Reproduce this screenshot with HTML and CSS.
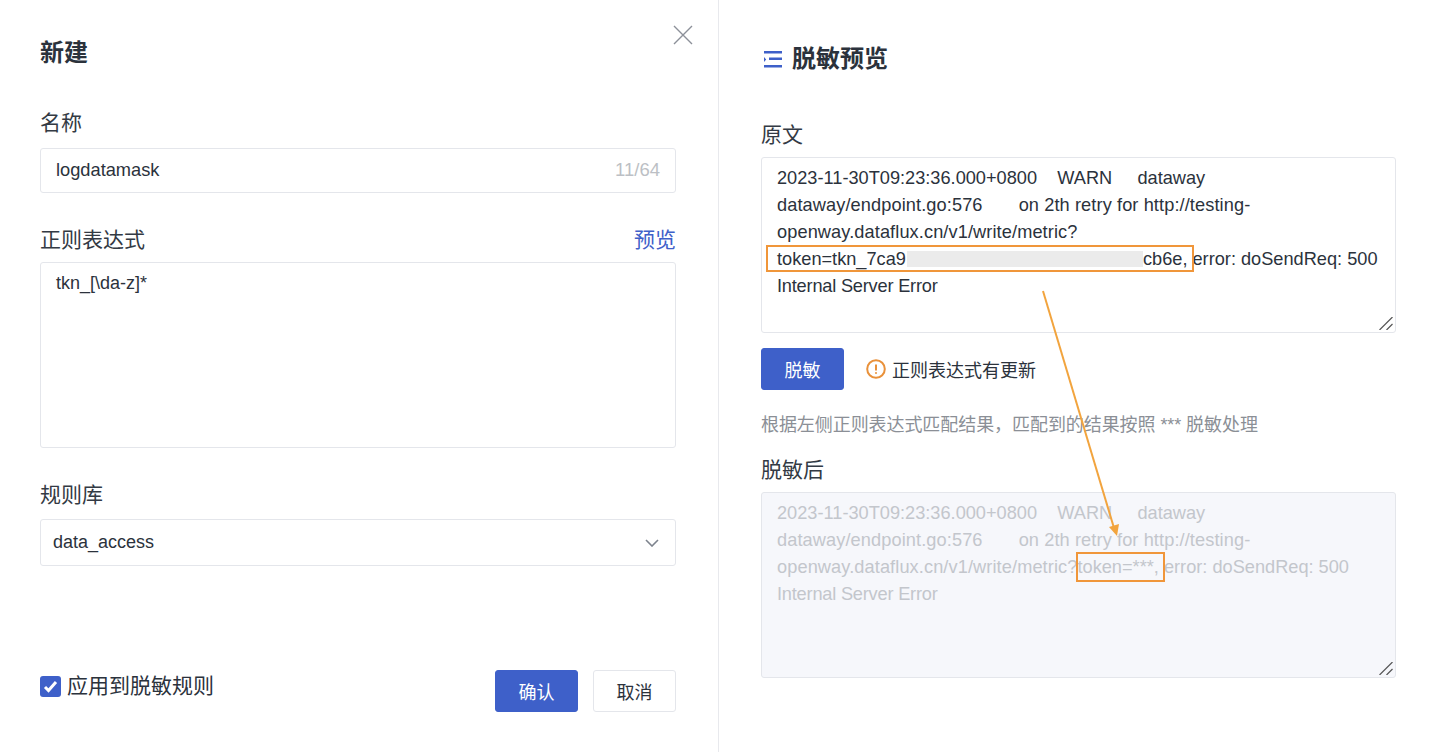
FILE: index.html
```html
<!DOCTYPE html>
<html lang="zh-CN">
<head>
  <meta charset="UTF-8">
  <title>新建</title>
  <meta name="viewport" content="width=device-width, initial-scale=1.0">
  <link rel="stylesheet" href="styles.css">
</head>
<body>
  <!-- Left: create form -->
  <section class="form-panel">
    <svg class="close-icon" width="20" height="20" viewBox="0 0 20 20"><path d="M1 1l18 18M19 1L1 19"/></svg>
    <h2 class="panel-title">新建</h2>

    <div class="field name-field">
      <label class="field-label">名称</label>
      <div class="input-box">
        <span>logdatamask</span>
        <span class="counter">11/64</span>
      </div>
    </div>

    <div class="field regex-field">
      <div class="label-row">
        <label class="field-label">正则表达式</label>
        <a class="preview-link" href="#">预览</a>
      </div>
      <div class="regex-box">tkn_[\da-z]*</div>
    </div>

    <div class="field rule-field">
      <label class="field-label">规则库</label>
      <div class="select-box">
        <span>data_access</span>
        <svg class="chevron" width="14" height="8" viewBox="0 0 14 8"><path d="M1 1l6 6 6-6"/></svg>
      </div>
    </div>

    <div class="form-footer">
      <label class="apply-check">
        <span class="check-mark">
          <svg width="15" height="13" viewBox="0 0 15 13"><path d="M2 7l3.500 3.500L13 2"/></svg>
        </span>
        应用到脱敏规则
      </label>
      <div class="footer-btns">
        <button class="btn btn-primary">确认</button>
        <button class="btn btn-plain">取消</button>
      </div>
    </div>
  </section>

  <!-- Right: preview -->
  <section class="preview-panel">
    <div class="preview-head">
      <svg class="list-icon" width="18" height="18" viewBox="0 0 18 18">
        <path d="M0 1h18v2.400H0zM5 7.500h13v2.400H5zM0 15h18v2.400H0zM0 7l2.200 2.500L0 12z"/>
      </svg>
      <h2 class="panel-title">脱敏预览</h2>
    </div>

    <label class="field-label source-label">原文</label>
    <div class="text-box">2023-11-30T09:23:36.000+0800    WARN     dataway<br><span class="url">dataway/endpoint.go:576       on 2th retry for http://testing-</span><br><span class="url">openway.dataflux.cn/v1/write/metric?</span><br>token=tkn_7ca9<span class="redacted"></span>cb6e, error: doSendReq: 500<br><span class="last-line">Internal Server Error</span><svg class="grip" width="14" height="13" viewBox="0 0 14 13"><path d="M0.500 13L13.500 0M7.500 13L13.500 7"/></svg></div>

    <div class="action-row">
      <button class="btn btn-primary">脱敏</button>
      <span class="update-note">
        <svg width="20" height="20" viewBox="0 0 20 20">
          <circle cx="10" cy="10" r="8.800"/>
          <path d="M10 5.500v6M10 13.200v1.600"/>
        </svg>
        正则表达式有更新
      </span>
    </div>

    <p class="hint">根据左侧正则表达式匹配结果，匹配到的结果按照 *** 脱敏处理</p>

    <label class="field-label result-label">脱敏后</label>
    <div class="text-box text-box-disabled">2023-11-30T09:23:36.000+0800    WARN     dataway<br><span class="url">dataway/endpoint.go:576       on 2th retry for http://testing-</span><br><span class="url">openway.dataflux.cn/v1/write/metric?</span>token=***, error: doSendReq: 500<br><span class="last-line">Internal Server Error</span><svg class="grip" width="14" height="13" viewBox="0 0 14 13"><path d="M0.500 13L13.500 0M7.500 13L13.500 7"/></svg></div>
  </section>

  <!-- Orange annotations drawn over the screenshot -->
  <svg class="annotations" width="1436" height="752" viewBox="0 0 1436 752">
    <rect x="767" y="246" width="426" height="25"/>
    <rect x="1077" y="553" width="87" height="28"/>
    <path d="M1043 291L1114 528"/>
    <path class="arrow-head" d="M1117 536L1109 527 1119 524z"/>
  </svg>
</body>
</html>
```

FILE: styles.css
```css
/* ===== Base ===== */
* {
  margin: 0;
  padding: 0;
  box-sizing: border-box;
}
html, body {
  height: 100%;
  font-family: "Liberation Sans", "Noto Sans CJK SC", sans-serif;
  font-size: 18px;
  color: #2b323c;
  background: #fff;
}
body {
  display: flex;
  position: relative;
  height: 752px;
  overflow: hidden;
}

/* ===== Shared ===== */
.panel-title {
  font-size: 24px;
  line-height: 32px;
  font-weight: bold;
  color: #2b323c;
}
.field-label {
  display: block;
  font-size: 21px;
  line-height: 28px;
  color: #333a44;
}
.btn {
  width: 83px;
  height: 42px;
  border-radius: 3px;
  font-family: inherit;
  font-size: 18px;
  cursor: pointer;
}
.btn-primary {
  background: #3e60c9;
  border: 1px solid #3e60c9;
  color: #fff;
}
.btn-plain {
  background: #fff;
  border: 1px solid #e4e6eb;
  color: #2b323c;
}

/* ===== Left form ===== */
.form-panel {
  position: relative;
  width: 719px;
  flex-shrink: 0;
  border-right: 1px solid #e8e9ed;
  padding: 37px 42px 40px 40px;
  display: flex;
  flex-direction: column;
}
.close-icon {
  position: absolute;
  top: 25px;
  left: 673px;
}
.close-icon path {
  fill: none;
  stroke: #8c9099;
  stroke-width: 1.4;
}
.name-field {
  margin-top: 40px;
}
.input-box {
  margin-top: 11px;
  height: 45px;
  border: 1px solid #e4e6eb;
  border-radius: 3px;
  padding: 0 15px 2px 15px;
  display: flex;
  align-items: center;
  justify-content: space-between;
  font-size: 18.25px;
}
.counter {
  color: #bcbfc5;
  font-size: 18.500px;
}
.regex-field {
  margin-top: 33px;
}
.label-row {
  display: flex;
  align-items: center;
  justify-content: space-between;
}
.preview-link {
  font-size: 21px;
  line-height: 28px;
  color: #3e60c9;
  text-decoration: none;
}
.regex-box {
  margin-top: 8px;
  height: 186px;
  border: 1px solid #e4e6eb;
  border-radius: 3px;
  padding: 7px 15px;
  line-height: 27px;
}
.rule-field {
  margin-top: 33px;
}
.select-box {
  margin-top: 10px;
  height: 47px;
  border: 1px solid #e4e6eb;
  border-radius: 3px;
  padding: 0 16px 0 12px;
  display: flex;
  align-items: center;
  justify-content: space-between;
}
.chevron path {
  fill: none;
  stroke: #7d838d;
  stroke-width: 1.6;
}
.form-footer {
  margin-top: auto;
  display: flex;
  align-items: flex-start;
  justify-content: space-between;
}
.apply-check {
  display: flex;
  align-items: center;
  gap: 6px;
  margin-top: 1px;
  font-size: 21px;
  line-height: 30px;
}
.check-mark {
  width: 21px;
  height: 21px;
  border-radius: 3px;
  background: #3e60c9;
  display: flex;
  align-items: center;
  justify-content: center;
}
.check-mark path {
  fill: none;
  stroke: #fff;
  stroke-width: 3;
}
.footer-btns {
  display: flex;
  gap: 15px;
}

/* ===== Right preview ===== */
.preview-panel {
  flex: 1;
  padding: 43px 40px 0 42px;
}
.preview-head {
  display: flex;
  align-items: center;
  gap: 10px;
  padding-left: 3px;
}
.list-icon path {
  fill: #3e60c9;
}
.source-label {
  margin-top: 46px;
}
.result-label {
  margin-top: 18px;
}
.text-box {
  position: relative;
  margin-top: 8px;
  height: 176px;
  border: 1px solid #e4e6eb;
  border-radius: 3px;
  padding: 7px 15px;
  font-size: 18.2px;
  line-height: 27px;
  white-space: pre-wrap;
}
.text-box-disabled {
  height: 186px;
  background: #f6f7fb;
  color: #c3c6cc;
}
.url {
  letter-spacing: 0.1px;
}
.last-line {
  letter-spacing: -0.2px;
}
.grip {
  position: absolute;
  right: 2px;
  bottom: 2px;
}
.grip path {
  fill: none;
  stroke: #555;
  stroke-width: 1.2;
}
.redacted {
  display: inline-block;
  width: 236px;
  height: 16px;
  margin-left: 1px;
  background: #ebebeb;
  vertical-align: -2px;
}
.action-row {
  margin-top: 15px;
  display: flex;
  align-items: center;
  gap: 22px;
}
.update-note {
  display: flex;
  align-items: center;
  gap: 6px;
  font-size: 18px;
  color: #2b323c;
}
.update-note circle, .update-note path {
  fill: none;
  stroke: #e9913a;
  stroke-width: 2;
}
.hint {
  margin-top: 22px;
  font-size: 18px;
  line-height: 26px;
  letter-spacing: -0.07px;
  color: #8b8f96;
}

/* ===== Annotations ===== */
.annotations {
  position: absolute;
  top: 0;
  left: 0;
  pointer-events: none;
}
.annotations rect {
  fill: none;
  stroke: #f0963a;
  stroke-width: 2;
}
.annotations path {
  fill: none;
  stroke: #f2a43e;
  stroke-width: 2;
}
.annotations .arrow-head {
  fill: #f2a43e;
  stroke: none;
}
```
